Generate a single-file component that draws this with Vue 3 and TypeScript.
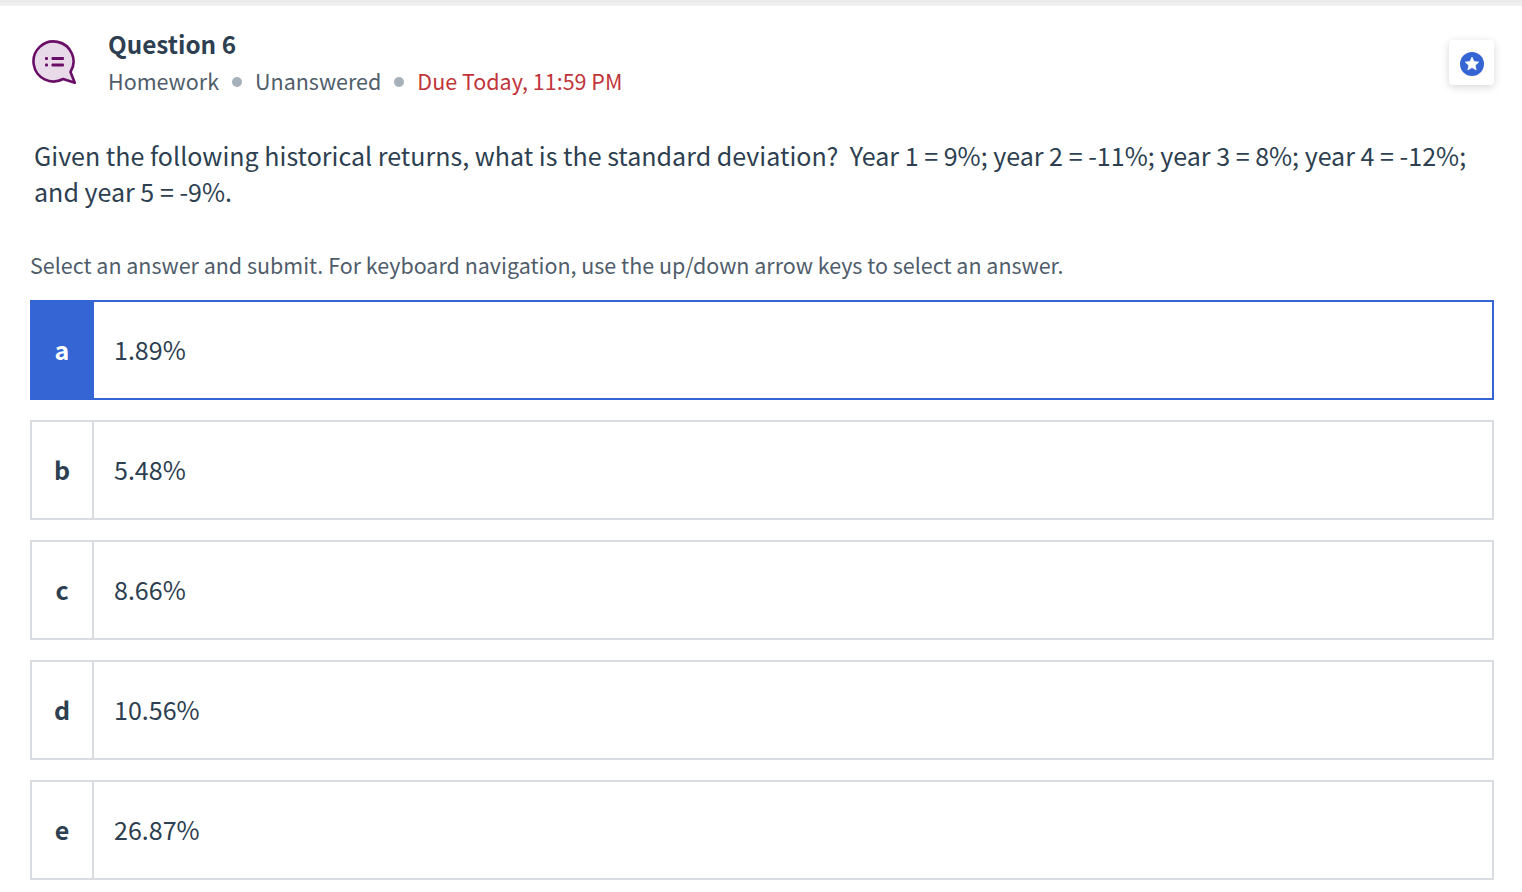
<template>
  <div class="page">
    <div class="top-line"></div>
    <header class="head">
      <svg class="q-icon" width="46" height="46" viewBox="0 0 46 46" fill="none">
        <path d="M33.100 40A20 20 0 1 1 40.500 33L44.800 43.800Z" fill="#e8dae8" stroke="#6a0f68" stroke-width="2.600" stroke-linejoin="round"/>
        <rect x="15" y="18" width="3" height="3" rx="1" fill="#6a0f68"/>
        <rect x="15" y="24.500" width="3" height="3" rx="1" fill="#6a0f68"/>
        <rect x="21.500" y="18" width="12.500" height="3" rx="1" fill="#6a0f68"/>
        <rect x="21.500" y="24.500" width="12.500" height="3" rx="1" fill="#6a0f68"/>
      </svg>
      <div class="head-text">
        <h2 class="q-title">Question 6</h2>
        <div class="q-meta">
          <span>Homework</span>
          <i class="dot"></i>
          <span>Unanswered</span>
          <i class="dot"></i>
          <span class="due">Due Today, 11:59 PM</span>
        </div>
      </div>
      <button class="star-btn">
        <svg width="24" height="24" viewBox="0 0 24 24">
          <circle cx="12" cy="12" r="12" fill="#3564d4"/>
          <path d="M12 5l2 4.400 4.800.6-3.500 3.300.9 4.700-4.200-2.400-4.200 2.400.9-4.700L5.200 10l4.800-.6z" fill="#fff" stroke="#fff" stroke-width="0.600" stroke-linejoin="round"/>
        </svg>
      </button>
    </header>
    <p class="question">Given the following historical returns, what is the standard deviation?&nbsp; Year 1 = 9%; year 2 = -11%; year 3 = 8%; year 4 = -12%; and year 5 = -9%.</p>
    <p class="hint">Select an answer and submit. For keyboard navigation, use the up/down arrow keys to select an answer.</p>
    <div class="answers">
      <div v-for="a in answers" :key="a.key" class="answer" :class="{ selected: a.key === selected }">
        <div class="letter">{{ a.key }}</div>
        <div class="value">{{ a.value }}</div>
      </div>
    </div>
  </div>
</template>

<script setup lang="ts">
import { ref } from 'vue'

interface Answer {
  key: string
  value: string
}

const selected = ref('a')

const answers: Answer[] = [
  { key: 'a', value: '1.89%' },
  { key: 'b', value: '5.48%' },
  { key: 'c', value: '8.66%' },
  { key: 'd', value: '10.56%' },
  { key: 'e', value: '26.87%' },
]
</script>

<style>
html, body {
  background: #fff;
  overflow: hidden;
}
</style>

<style scoped>
.page {
  height: 892px;
  overflow: hidden;
  font-family: "Noto Sans CJK SC", "Noto Sans", sans-serif;
  color: #2d3f50;
}

.top-line {
  height: 6px;
  background: linear-gradient(#e9e9e9, #f2f2f2);
}

.head {
  display: flex;
  align-items: flex-start;
  padding: 20px 28px 0 30px;
}

.q-icon {
  margin-top: 13px;
  flex-shrink: 0;
}

.head-text {
  margin-left: 32px;
  flex: 1;
}

.q-title {
  margin: 0;
  font-size: 24.300px;
  line-height: 36px;
  font-weight: 600;
  color: #2d3f50;
}

.q-meta {
  display: flex;
  align-items: center;
  gap: 13px;
  font-size: 21.500px;
  line-height: 38px;
  color: #4f5d6b;
}

.dot {
  width: 10px;
  height: 10px;
  margin-top: 2px;
  border-radius: 50%;
  background: #a5b0ba;
}

.due {
  color: #c1353a;
}

.star-btn {
  width: 45px;
  height: 45px;
  margin-top: 14px;
  padding: 0 0 0 1px;
  border: none;
  background: #fff;
  border-radius: 4px;
  box-shadow: 0 2px 8px rgba(0, 0, 0, 0.16);
  display: flex;
  align-items: center;
  justify-content: center;
}

.star-btn svg {
  margin-top: 2px;
}

.question {
  margin: 37px 28px 0 34px;
  font-size: 25.060px;
  line-height: 36px;
  color: #2d3f50;
}

.hint {
  margin: 39px 28px 0 30px;
  font-size: 21.480px;
  line-height: 34px;
  color: #4f5d6b;
}

.answers {
  display: flex;
  flex-direction: column;
  gap: 20px;
  margin: 18px 28px 0 30px;
}

.answer {
  display: flex;
  height: 100px;
  box-sizing: border-box;
  border: 2px solid #d9dde1;
}

.letter {
  width: 62px;
  flex-shrink: 0;
  box-sizing: border-box;
  border-right: 2px solid #d9dde1;
  padding-bottom: 2px;
  display: flex;
  align-items: center;
  justify-content: center;
  font-size: 25.060px;
  font-weight: 600;
}

.value {
  padding: 0 0 2px 20px;
  display: flex;
  align-items: center;
  font-size: 25.060px;
}

.answer.selected {
  border-color: #3564d4;
}

.answer.selected .letter {
  background: #3564d4;
  border-right-color: #3564d4;
  color: #fff;
}
</style>
